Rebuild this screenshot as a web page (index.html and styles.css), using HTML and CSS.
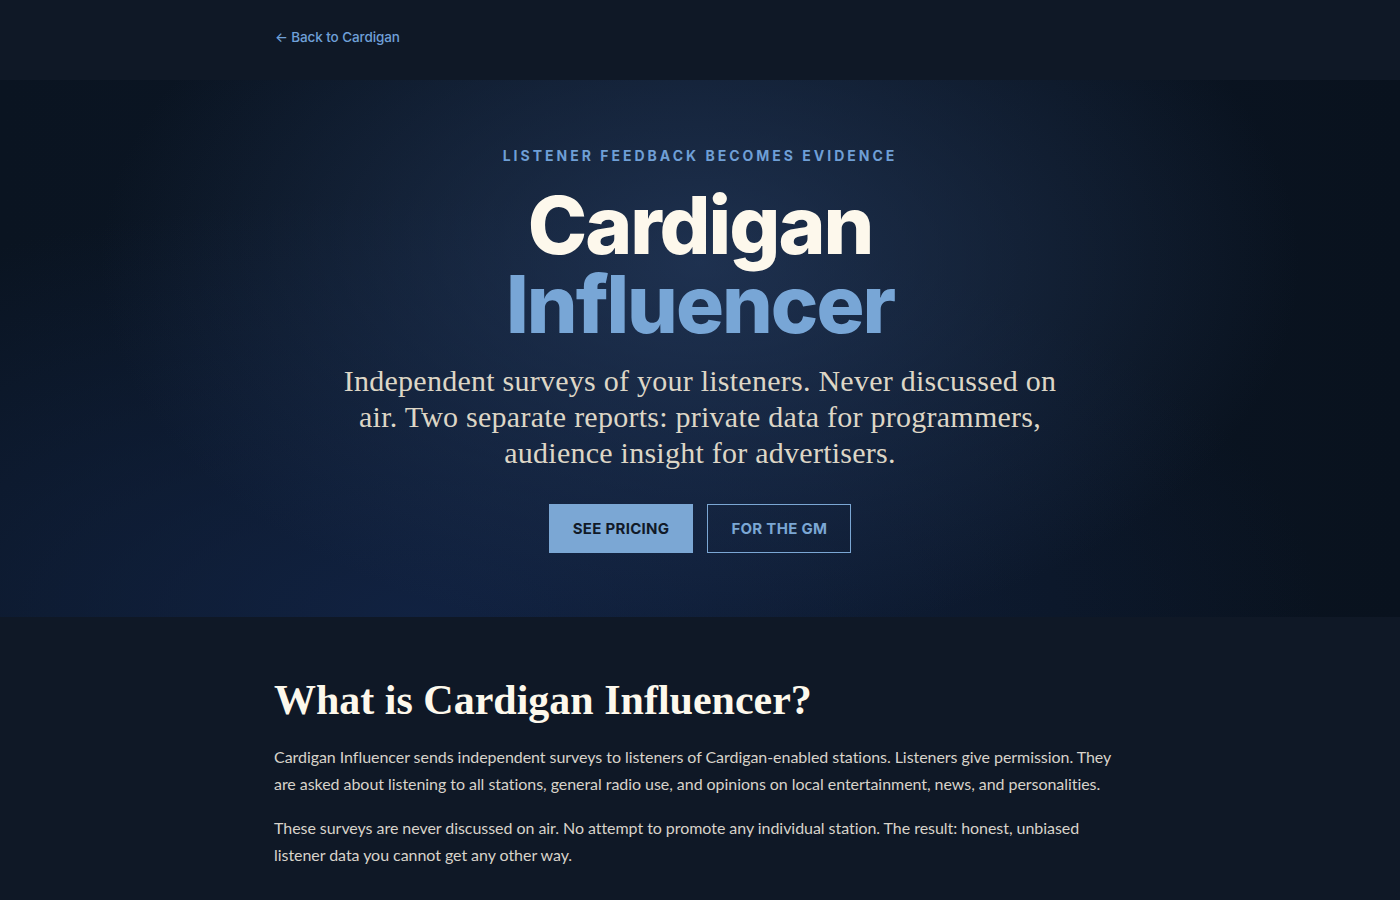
FILE: index.html
```html
<!DOCTYPE html>
<html lang="en">
<head>
<meta charset="utf-8">
<title>Cardigan Influencer</title>
<link rel="stylesheet" href="styles.css">
</head>
<body>
<header class="nav">
  <div class="wrap">
    <a class="back" href="#">← Back to Cardigan</a>
  </div>
</header>
<section class="hero">
  <p class="eyebrow">LISTENER FEEDBACK BECOMES EVIDENCE</p>
  <h1 class="title"><span class="t1">Cardigan</span><span class="t2">Influencer</span></h1>
  <p class="lede">Independent surveys of your listeners. Never discussed on air. Two separate reports: private data for programmers, audience insight for advertisers.</p>
  <div class="actions">
    <a class="btn btn-primary" href="#">SEE PRICING</a>
    <a class="btn btn-outline" href="#">FOR THE GM</a>
  </div>
</section>
<section class="about">
  <div class="wrap">
    <h2>What is Cardigan Influencer?</h2>
    <p>Cardigan Influencer sends independent surveys to listeners of Cardigan-enabled stations. Listeners give permission. They are asked about listening to all stations, general radio use, and opinions on local entertainment, news, and personalities.</p>
    <p>These surveys are never discussed on air. No attempt to promote any individual station. The result: honest, unbiased listener data you cannot get any other way.</p>
  </div>
</section>
</body>
</html>
```

FILE: styles.css
```css
* { box-sizing: border-box; }
html, body { margin: 0; padding: 0; }
body {
  background: #0f1826;
  color: #d9d4ca;
  font-family: "Lato", "Noto Sans", sans-serif;
}
.wrap {
  width: 852px;
  margin: 0 auto;
}
.nav {
  height: 80px;
  background: #0f1826;
  display: flex;
  align-items: center;
}
.nav .wrap { padding-left: 1px; padding-bottom: 10px; }
.back {
  font-family: "Inter", sans-serif;
  font-size: 13.5px;
  font-weight: 500;
  color: #6fa0d8;
  text-decoration: none;
  letter-spacing: -0.1px;
}
.hero {
  height: 537px;
  display: flex;
  flex-direction: column;
  align-items: center;
  padding-top: 67px;
  background:
    radial-gradient(ellipse 600px 380px at 50% 34%, rgba(38,60,96,0.7), rgba(38,60,96,0) 100%),
    radial-gradient(ellipse 900px 420px at 30% 100%, rgba(18,36,70,0.85), rgba(18,36,70,0) 100%),
    linear-gradient(90deg, #0a1421 0%, #0b1626 50%, #09121e 100%);
}
.eyebrow {
  margin: 0;
  font-family: "Inter", sans-serif;
  font-size: 14px;
  font-weight: 700;
  letter-spacing: 3px;
  color: #6f9fd6;
  line-height: 18px;
}
.title {
  margin: 20px 0 0;
  display: flex;
  flex-direction: column;
  align-items: center;
  font-family: "Inter", sans-serif;
  font-weight: 800;
  font-size: 80px;
  line-height: 79px;
  letter-spacing: -2px;
}
.t1 { color: #fdf8ec; }
.t2 { color: #78a6d6; }
.lede {
  margin: 20px 0 0;
  max-width: 722px;
  text-align: center;
  font-family: "Liberation Serif", serif;
  font-size: 30px;
  line-height: 36px;
  letter-spacing: 0.25px;
  color: #ddd6c6;
}
.actions {
  margin-top: 33px;
  display: flex;
  gap: 14px;
}
.btn {
  display: flex;
  align-items: center;
  justify-content: center;
  height: 49px;
  padding: 0 23px;
  font-family: "Inter", sans-serif;
  font-weight: 700;
  font-size: 15px;
  letter-spacing: 0.3px;
  text-decoration: none;
}
.btn-primary {
  background: #7ba7d4;
  color: #111a28;
  border: 1px solid #7ba7d4;
}
.btn-outline {
  background: transparent;
  color: #7ba7d4;
  border: 1px solid #7ba7d4;
}
.about {
  padding-top: 57px;
  padding-bottom: 40px;
}
.about h2 {
  margin: 0 0 17px;
  font-family: "Liberation Serif", serif;
  font-weight: 700;
  font-size: 42px;
  line-height: 52px;
  color: #fdf8ec;
}
.about p {
  margin: 0 0 17px;
  font-size: 16px;
  line-height: 27px;
  letter-spacing: -0.05px;
  color: #d8d3ca;
}
```
